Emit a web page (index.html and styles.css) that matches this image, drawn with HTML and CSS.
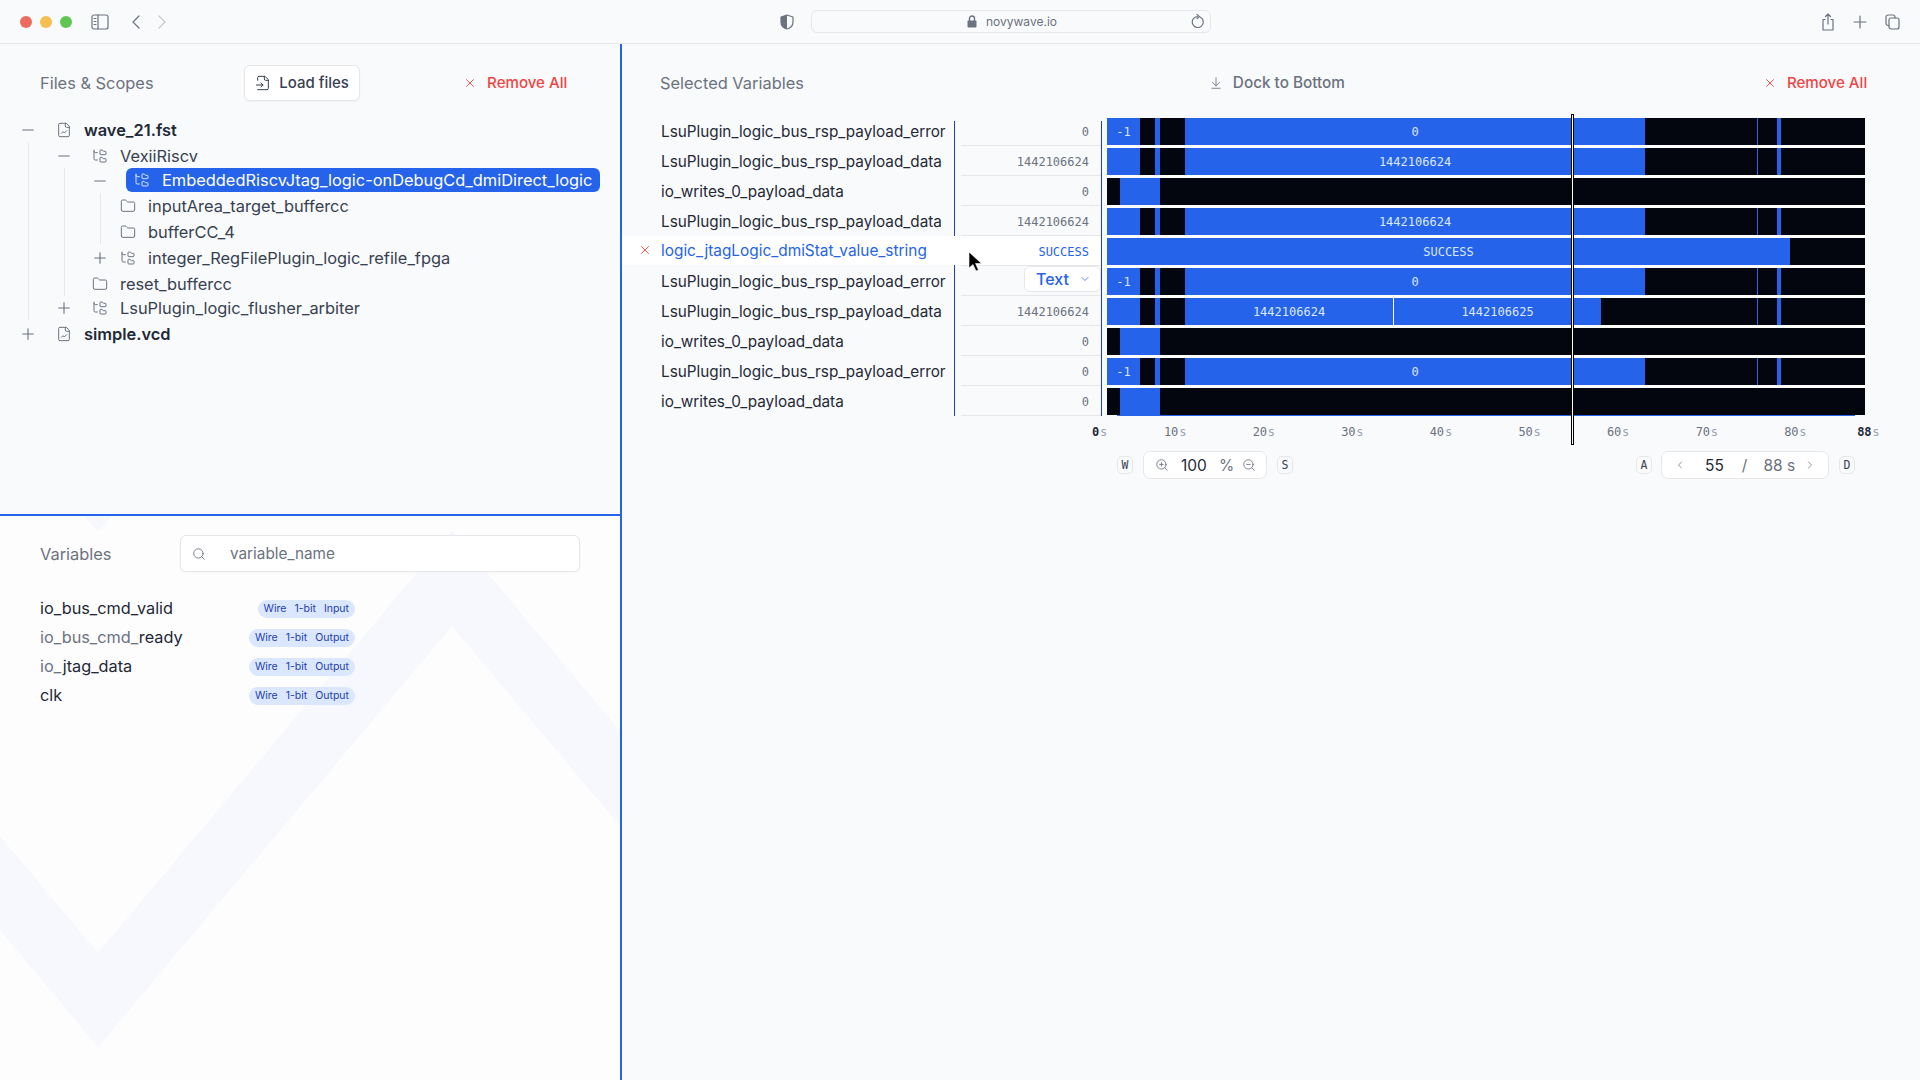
FILE: index.html
```html
<!DOCTYPE html>
<html lang="en">
<head>
<meta charset="utf-8">
<title>NovyWave</title>
<link rel="stylesheet" href="styles.css">
</head>
<body>
<svg class="sprite" aria-hidden="true">
  <symbol id="i-tree" viewBox="0 0 24 24"><path d="M20 10a1 1 0 0 0 1-1V6a1 1 0 0 0-1-1h-2.5a1 1 0 0 1-.8-.4l-.9-1.2A1 1 0 0 0 15 3h-2a1 1 0 0 0-1 1v5a1 1 0 0 0 1 1Z"/><path d="M20 21a1 1 0 0 0 1-1v-3a1 1 0 0 0-1-1h-2.9a1 1 0 0 1-.88-.55l-.42-.85a1 1 0 0 0-.92-.6H13a1 1 0 0 0-1 1v5a1 1 0 0 0 1 1Z"/><path d="M3 5a2 2 0 0 0 2 2h3"/><path d="M3 3v13a2 2 0 0 0 2 2h3"/></symbol>
  <symbol id="i-folder" viewBox="0 0 24 24"><path d="M20 20a2 2 0 0 0 2-2V8a2 2 0 0 0-2-2h-7.9a2 2 0 0 1-1.69-.9L9.6 3.9A2 2 0 0 0 7.93 3H4a2 2 0 0 0-2 2v13a2 2 0 0 0 2 2Z"/></symbol>
  <symbol id="i-file" viewBox="0 0 24 24"><path d="M15 2H6a2 2 0 0 0-2 2v16a2 2 0 0 0 2 2h12a2 2 0 0 0 2-2V7Z"/><path d="M14 2v4a2 2 0 0 0 2 2h4"/><path d="m16 13-3.5 3.5-2-2L8 17"/></symbol>
  <symbol id="i-load" viewBox="0 0 24 24"><path d="M4 22h14a2 2 0 0 0 2-2V7l-5-5H6a2 2 0 0 0-2 2v4"/><path d="M14 2v4a2 2 0 0 0 2 2h4"/><path d="M2 15h10"/><path d="m9 18 3-3-3-3"/></symbol>
  <symbol id="i-x" viewBox="0 0 24 24"><path d="M18 6 6 18"/><path d="m6 6 12 12"/></symbol>
  <symbol id="i-minus" viewBox="0 0 24 24"><path d="M5 12h14"/></symbol>
  <symbol id="i-plus" viewBox="0 0 24 24"><path d="M5 12h14"/><path d="M12 5v14"/></symbol>
  <symbol id="i-search" viewBox="0 0 24 24"><circle cx="11" cy="11" r="8"/><path d="m21 21-4.300-4.300"/></symbol>
  <symbol id="i-zin" viewBox="0 0 24 24"><circle cx="11" cy="11" r="8"/><path d="m21 21-4.300-4.300"/><path d="M11 8v6"/><path d="M8 11h6"/></symbol>
  <symbol id="i-zout" viewBox="0 0 24 24"><circle cx="11" cy="11" r="8"/><path d="m21 21-4.300-4.300"/><path d="M8 11h6"/></symbol>
  <symbol id="i-dock" viewBox="0 0 24 24"><path d="M12 17V3"/><path d="m6 11 6 6 6-6"/><path d="M19 21H5"/></symbol>
  <symbol id="i-left" viewBox="0 0 24 24"><path d="m15 18-6-6 6-6"/></symbol>
  <symbol id="i-right" viewBox="0 0 24 24"><path d="m9 18 6-6-6-6"/></symbol>
  <symbol id="i-down" viewBox="0 0 24 24"><path d="m6 9 6 6 6-6"/></symbol>
</svg>

<header class="topbar">
  <span class="light red"></span><span class="light yellow"></span><span class="light green"></span>
  <svg class="tb-side" width="18" height="16" viewBox="0 0 18 16"><rect x="1" y="1" width="16" height="14" rx="2"/><path d="M7 1v14M3 4.500h2M3 7.500h2M3 10.500h2"/></svg>
  <svg class="tb-back" width="10" height="16" viewBox="0 0 10 16"><path d="M8 2 2 8l6 6"/></svg>
  <svg class="tb-fwd" width="10" height="16" viewBox="0 0 10 16"><path d="m2 2 6 6-6 6"/></svg>
  <svg class="tb-shield" width="14" height="16" viewBox="0 0 14 16"><path class="fill" d="M7 1 1 3v5c0 3.500 2.500 6 6 7Z"/><path d="M7 1l6 2v5c0 3.500-2.500 6-6 7-3.500-1-6-3.500-6-7V3Z"/></svg>
  <div class="urlbar">
    <svg class="tb-lock" width="10" height="13" viewBox="0 0 10 13"><path class="line" d="M2.500 6V3.500a2.500 2.500 0 0 1 5 0V6"/><rect x="0.500" y="5.500" width="9" height="7" rx="1"/></svg>
    <span class="url">novywave.io</span>
    <svg class="tb-reload" width="14" height="15" viewBox="0 0 14 15"><path d="M9.500 3.200a5.500 5.500 0 1 1-3-.7"/><path d="M6 .5 8.500 2.600 6 4.700"/></svg>
  </div>
  <div class="tb-right">
    <svg width="14" height="18" viewBox="0 0 14 18"><path d="M4 6.500H2v10.500h10V6.500h-2M7 11V1M4.500 3.500 7 1l2.500 2.500"/></svg>
    <svg width="14" height="14" viewBox="0 0 14 14"><path d="M7 1v12M1 7h12"/></svg>
    <svg width="15" height="16" viewBox="0 0 15 16"><rect x="4" y="4" width="10" height="11" rx="2"/><path d="M4 11.500H3a2 2 0 0 1-2-2V3a2 2 0 0 1 2-2h5a2 2 0 0 1 2 2v1"/></svg>
  </div>
</header>

<main class="main">
  <aside class="left">
    <section class="files">
      <div class="phead">
        <h2 class="ptitle">Files &amp; Scopes</h2>
        <button class="load"><svg class="ic ic16"><use href="#i-load"/></svg>Load files</button>
        <button class="remove remove-left"><svg class="ic ic14"><use href="#i-x"/></svg>Remove All</button>
      </div>
      <div class="tree">
        <i class="guide g1"></i><i class="guide g2"></i><i class="guide g3"></i>
        <div class="tr l0"><svg class="ic tog"><use href="#i-minus"/></svg><svg class="ic node"><use href="#i-file"/></svg><span class="tn strong">wave_21.fst</span></div>
        <div class="tr l1"><svg class="ic tog"><use href="#i-minus"/></svg><svg class="ic node"><use href="#i-tree"/></svg><span class="tn">VexiiRiscv</span></div>
        <div class="tr l2 up1"><svg class="ic tog"><use href="#i-minus"/></svg><div class="sel"><svg class="ic node"><use href="#i-tree"/></svg><span class="tn">EmbeddedRiscvJtag_logic-onDebugCd_dmiDirect_logic</span></div></div>
        <div class="tr l2 up1"><span class="tog"></span><svg class="ic node"><use href="#i-folder"/></svg><span class="tn">inputArea_target_buffercc</span></div>
        <div class="tr l2"><span class="tog"></span><svg class="ic node"><use href="#i-folder"/></svg><span class="tn">bufferCC_4</span></div>
        <div class="tr l2"><svg class="ic tog"><use href="#i-plus"/></svg><svg class="ic node"><use href="#i-tree"/></svg><span class="tn">integer_RegFilePlugin_logic_refile_fpga</span></div>
        <div class="tr l1"><span class="tog"></span><svg class="ic node"><use href="#i-folder"/></svg><span class="tn">reset_buffercc</span></div>
        <div class="tr l1 up2"><svg class="ic tog"><use href="#i-plus"/></svg><svg class="ic node"><use href="#i-tree"/></svg><span class="tn">LsuPlugin_logic_flusher_arbiter</span></div>
        <div class="tr l0"><svg class="ic tog"><use href="#i-plus"/></svg><svg class="ic node"><use href="#i-file"/></svg><span class="tn strong">simple.vcd</span></div>
      </div>
    </section>
    <section class="vars">
      <svg class="zigzag" width="620" height="564" viewBox="0 516 620 564"><path d="M0 836 98 953 452 531 620 731V826L452 626 98 1047 0 930Z"/><path d="M84 516h28L98 532Z"/></svg>
      <div class="vhead">
        <h2 class="ptitle vtitle">Variables</h2>
        <div class="search"><svg class="ic ic14"><use href="#i-search"/></svg><span>variable_name</span></div>
      </div>
      <ul class="vlist">
        <li><span class="vn">io_bus_cmd_valid</span><span class="chip"><b>Wire</b><b>1-bit</b><b>Input</b></span></li>
        <li><span class="vn"><em>io_bus_cmd_</em>ready</span><span class="chip"><b>Wire</b><b>1-bit</b><b>Output</b></span></li>
        <li><span class="vn"><em>io_</em>jtag_data</span><span class="chip"><b>Wire</b><b>1-bit</b><b>Output</b></span></li>
        <li><span class="vn">clk</span><span class="chip"><b>Wire</b><b>1-bit</b><b>Output</b></span></li>
      </ul>
    </section>
  </aside>

  <section class="right">
    <div class="phead rhead">
      <h2 class="ptitle">Selected Variables</h2>
      <button class="dock"><svg class="ic ic14"><use href="#i-dock"/></svg>Dock to Bottom</button>
      <button class="remove"><svg class="ic ic14"><use href="#i-x"/></svg>Remove All</button>
    </div>
    <div class="track">
      <div class="vrow">
        <div class="meta"><div class="nm">LsuPlugin_logic_bus_rsp_payload_error</div><div class="val">0</div></div>
        <div class="wave"><i class="b" style="width:33px">-1</i><i class="k" style="width:15px"></i><i class="b" style="width:5px"></i><i class="k" style="width:25px"></i><i class="b" style="width:460px">0</i><i class="k" style="width:112px"></i><i class="b" style="width:1px"></i><i class="k" style="width:19px"></i><i class="b" style="width:4px"></i><i class="k" style="width:84px"></i></div>
      </div>
      <div class="vrow">
        <div class="meta"><div class="nm">LsuPlugin_logic_bus_rsp_payload_data</div><div class="val">1442106624</div></div>
        <div class="wave"><i class="b" style="width:33px"></i><i class="k" style="width:15px"></i><i class="b" style="width:5px"></i><i class="k" style="width:25px"></i><i class="b" style="width:460px">1442106624</i><i class="k" style="width:112px"></i><i class="b" style="width:1px"></i><i class="k" style="width:19px"></i><i class="b" style="width:4px"></i><i class="k" style="width:84px"></i></div>
      </div>
      <div class="vrow">
        <div class="meta"><div class="nm">io_writes_0_payload_data</div><div class="val">0</div></div>
        <div class="wave"><i class="k" style="width:13px"></i><i class="b" style="width:40px"></i><i class="k" style="width:705px"></i></div>
      </div>
      <div class="vrow">
        <div class="meta"><div class="nm">LsuPlugin_logic_bus_rsp_payload_data</div><div class="val">1442106624</div></div>
        <div class="wave"><i class="b" style="width:33px"></i><i class="k" style="width:15px"></i><i class="b" style="width:5px"></i><i class="k" style="width:25px"></i><i class="b" style="width:460px">1442106624</i><i class="k" style="width:112px"></i><i class="b" style="width:1px"></i><i class="k" style="width:19px"></i><i class="b" style="width:4px"></i><i class="k" style="width:84px"></i></div>
      </div>
      <div class="vrow active">
        <div class="meta"><svg class="ic rowx"><use href="#i-x"/></svg><div class="nm">logic_jtagLogic_dmiStat_value_string</div><div class="val">SUCCESS</div></div>
        <div class="wave"><i class="b" style="width:683px">SUCCESS</i><i class="k" style="width:75px"></i></div>
      </div>
      <div class="vrow">
        <div class="meta"><div class="nm">LsuPlugin_logic_bus_rsp_payload_error</div><div class="val val-menu"><div class="fmt">Text<svg class="ic ic12"><use href="#i-down"/></svg></div></div></div>
        <div class="wave"><i class="b" style="width:33px">-1</i><i class="k" style="width:15px"></i><i class="b" style="width:5px"></i><i class="k" style="width:25px"></i><i class="b" style="width:460px">0</i><i class="k" style="width:112px"></i><i class="b" style="width:1px"></i><i class="k" style="width:19px"></i><i class="b" style="width:4px"></i><i class="k" style="width:84px"></i></div>
      </div>
      <div class="vrow">
        <div class="meta"><div class="nm">LsuPlugin_logic_bus_rsp_payload_data</div><div class="val">1442106624</div></div>
        <div class="wave"><i class="b" style="width:33px"></i><i class="k" style="width:15px"></i><i class="b" style="width:5px"></i><i class="k" style="width:25px"></i><i class="b" style="width:208px">1442106624</i><i class="w" style="width:1px"></i><i class="b" style="width:207px">1442106625</i><i class="k" style="width:156px"></i><i class="b" style="width:1px"></i><i class="k" style="width:19px"></i><i class="b" style="width:4px"></i><i class="k" style="width:84px"></i></div>
      </div>
      <div class="vrow">
        <div class="meta"><div class="nm">io_writes_0_payload_data</div><div class="val">0</div></div>
        <div class="wave"><i class="k" style="width:13px"></i><i class="b" style="width:40px"></i><i class="k" style="width:705px"></i></div>
      </div>
      <div class="vrow">
        <div class="meta"><div class="nm">LsuPlugin_logic_bus_rsp_payload_error</div><div class="val">0</div></div>
        <div class="wave"><i class="b" style="width:33px">-1</i><i class="k" style="width:15px"></i><i class="b" style="width:5px"></i><i class="k" style="width:25px"></i><i class="b" style="width:460px">0</i><i class="k" style="width:112px"></i><i class="b" style="width:1px"></i><i class="k" style="width:19px"></i><i class="b" style="width:4px"></i><i class="k" style="width:84px"></i></div>
      </div>
      <div class="vrow">
        <div class="meta"><div class="nm">io_writes_0_payload_data</div><div class="val">0</div></div>
        <div class="wave"><i class="k" style="width:13px"></i><i class="b" style="width:40px"></i><i class="k" style="width:705px"></i></div>
      </div>
      <i class="baseline"></i>
      <i class="timecursor"></i>
      <svg class="pointer" width="18" height="22" viewBox="0 0 18 22"><path d="M1 1v16l4-3.500 3 6.500 2.500-1-3-6.500h6Z"/></svg>
    </div>
    <div class="axis">
      <span class="tick t0"><b>0</b><u>s</u></span>
      <span class="tick">10<u>s</u></span>
      <span class="tick">20<u>s</u></span>
      <span class="tick">30<u>s</u></span>
      <span class="tick">40<u>s</u></span>
      <span class="tick">50<u>s</u></span>
      <span class="tick">60<u>s</u></span>
      <span class="tick">70<u>s</u></span>
      <span class="tick t80">80<u>s</u></span>
      <span class="tick"><b>88</b><u>s</u></span>
    </div>
    <div class="controls">
      <kbd class="key">W</kbd>
      <div class="pill zoom">
        <svg class="ic ic14"><use href="#i-zin"/></svg>
        <span class="num n100">100</span>
        <span class="unit">%</span>
        <svg class="ic ic14"><use href="#i-zout"/></svg>
      </div>
      <kbd class="key">S</kbd>
      <kbd class="key key-a">A</kbd>
      <div class="pill time">
        <svg class="ic ic12"><use href="#i-left"/></svg>
        <span class="num n55">55</span>
        <span class="unit slash">/</span>
        <span class="unit total">88 s</span>
        <svg class="ic ic12"><use href="#i-right"/></svg>
      </div>
      <kbd class="key">D</kbd>
    </div>
  </section>
</main>
</body>
</html>
```

FILE: styles.css
```css
* { box-sizing: border-box; }
html, body { margin: 0; height: 100%; }
body {
  width: 1920px;
  height: 1080px;
  overflow: hidden;
  background: #f9fafc;
  color: #1f2937;
  font-family: Inter, "Liberation Sans", sans-serif;
  font-size: 16px;
}
.sprite { display: none; }
h2, ul { margin: 0; padding: 0; }
ul { list-style: none; }
button { font: inherit; background: none; border: 0; padding: 0; display: inline-flex; align-items: center; }
.ic { fill: none; stroke: currentColor; stroke-width: 1.5; stroke-linecap: round; stroke-linejoin: round; flex: none; }
.ic12 { width: 12px; height: 12px; }
.ic14 { width: 14px; height: 14px; }
.ic16 { width: 16px; height: 16px; }

/* browser bar */
.topbar {
  height: 44px;
  display: flex;
  align-items: center;
  padding-left: 20px;
  border-bottom: 1px solid #e5e7eb;
  background: #f9fafc;
}
.topbar svg { fill: none; stroke: #6b7280; stroke-width: 1.2; stroke-linecap: round; stroke-linejoin: round; flex: none; }
.light { width: 12px; height: 12px; border-radius: 50%; margin-right: 8px; }
.red { background: #ed6a5e; }
.yellow { background: #f5bf4f; }
.green { background: #61c554; }
.tb-side { margin-left: 10.5px; }
.tb-back { margin-left: 22px; }
.tb-fwd { margin-left: 16px; stroke: #c4c8cf !important; }
.tb-shield { margin-left: 613.5px; }
.tb-shield .fill { fill: #6b7280; stroke: none; }
.urlbar {
  margin-left: 17px;
  width: 400px;
  height: 23px;
  display: flex;
  align-items: center;
  border: 1px solid #e5e7eb;
  border-radius: 6px;
  padding: 0 5px 0 155px;
}
.tb-lock rect { fill: #6b7280; stroke: none; }
.tb-lock .line { stroke-width: 1.4; }
.url { margin-left: 9px; font-size: 12px; color: #6b7280; }
.tb-reload { margin-left: auto; }
.tb-right { margin-left: 609.5px; display: flex; align-items: center; gap: 18px; }

.main { display: flex; height: 1036px; }

/* left column */
.left {
  width: 622px;
  flex: none;
  display: flex;
  flex-direction: column;
  border-right: 2px solid #2563eb;
}
.files { height: 472px; flex: none; border-bottom: 2px solid #2563eb; background: #f9fafc; }
.phead { display: flex; align-items: center; height: 36px; margin-top: 21px; padding-left: 40px; }
.ptitle { font-size: 16.4px; font-weight: 400; color: #6b7280; }
.load {
  margin-left: 90.5px;
  width: 116px;
  height: 36px;
  justify-content: center;
  gap: 8px;
  padding-bottom: 1px;
  background: #fff;
  border: 1px solid #e5e7eb;
  border-radius: 6px;
  box-shadow: 0 1px 2px rgba(0,0,0,.04);
  font-weight: 500;
  font-size: 15px;
  color: #374151;
}
.remove { gap: 10px; color: #ef4444; font-weight: 500; font-size: 15.1px; padding-bottom: 1px; }
.remove-left { margin-left: 103px; }

.tree { position: relative; margin-top: 16px; }
.guide { position: absolute; width: 1px; background: #e5e7eb; }
.g1 { left: 28px; top: 26px; height: 177px; }
.g2 { left: 64px; top: 51px; height: 128px; }
.g3 { left: 100px; top: 76px; height: 51px; }
.tr { display: flex; align-items: center; height: 26px; color: #374151; }
.up1 { margin-top: -1px; }
.up2 { margin-top: -2px; }
.l0 { padding-left: 19px; }
.l1 { padding-left: 55px; }
.l2 { padding-left: 91px; }
.tog { width: 18px; height: 18px; flex: none; color: #6b7280; margin-right: 19px; }
.l2 .tog { margin-right: 11px; }
.node { width: 16px; height: 16px; color: #6b7280; }
.tn { margin-left: 12px; white-space: nowrap; font-size: 16.4px; }
.strong { font-weight: 600; color: #1f2937; }
.sel {
  display: flex;
  align-items: center;
  height: 24px;
  width: 474px;
  margin: -2px 0 0 6px;
  padding-left: 8px;
  background: #2563eb;
  border-radius: 6px;
  color: #fff;
}
.sel .node { color: #dbe7fe; }

/* variables */
.vars { position: relative; flex: 1; background: #fdfdfe; overflow: hidden; padding-top: 19px; }
.zigzag { position: absolute; left: 0; top: 0; }
.zigzag path { fill: #f6f8fd; }
.vhead { position: relative; display: flex; align-items: center; padding-left: 40px; }
.vtitle { width: 140px; }
.search {
  width: 400px;
  height: 37px;
  display: flex;
  align-items: center;
  padding-left: 11px;
  background: #fff;
  border: 1px solid #e5e7eb;
  border-radius: 6px;
  box-shadow: 0 1px 2px rgba(0,0,0,.03);
  color: #6b7280;
  font-size: 15.3px;
}
.search span { margin-left: 24px; }
.vlist { position: relative; margin: 21px 0 0 40px; width: 315px; }
.vlist li { display: flex; align-items: center; justify-content: space-between; height: 29px; }
.vn { color: #1f2937; font-size: 16.3px; }
.vn em { font-style: normal; color: #6b7280; }
.chip {
  display: flex;
  align-items: center;
  gap: 8px;
  height: 18px;
  margin-top: 2px;
  padding: 0 6px;
  border-radius: 9px;
  background: #dbe7fe;
  color: #1e40af;
  font-size: 10.5px;
}
.chip b { font-weight: 400; }

/* right column */
.right { flex: 1; min-width: 0; }
.rhead { padding-left: 38px; }
.dock { margin-left: 405px; gap: 10px; color: #6b7280; font-weight: 500; font-size: 15.3px; padding-bottom: 1px; }
.rhead .remove { margin-left: 418px; }
.track { position: relative; margin-top: 17px; height: 300px; }
.track::before, .track::after {
  content: "";
  position: absolute;
  top: 3px;
  height: 295px;
  width: 1px;
  background: #1e40af;
}
.track::before { left: 332px; }
.track::after { left: 479px; }
.vrow { display: flex; height: 30px; align-items: flex-start; }
.meta { position: relative; width: 480px; height: 28px; flex: none; display: flex; }
.nm { width: 332px; flex: none; padding: 0 0 2px 39px; display: flex; align-items: center; height: 28px; color: #1f2937; white-space: nowrap; font-size: 15.3px; }
.val {
  margin-left: 7px;
  width: 140px;
  height: 28px;
  display: flex;
  align-items: center;
  justify-content: flex-end;
  padding-right: 12px;
  border-bottom: 1px solid #e5e7eb;
  font: 12px "DejaVu Sans Mono", monospace;
  color: #6b7280;
}
.active .meta { background: #fff; height: 29px; margin-top: -2px; }
.active .nm { color: #2563eb; padding-bottom: 0; font-size: 15.4px; }
.active .val { color: #2563eb; padding-top: 3px; height: 30px; }
.rowx { position: absolute; left: 16px; top: 7px; width: 14px; height: 14px; color: #ef4444; }
.val-menu { align-items: flex-start; padding-right: 0; }
.fmt {
  margin-top: -2px;
  width: 77px;
  height: 26px;
  display: flex;
  align-items: center;
  gap: 10px;
  padding-left: 11px;
  background: #fff;
  border: 1px solid #e5e7eb;
  border-radius: 6px;
  font: 500 16px Inter, sans-serif;
  color: #2563eb;
}
.wave {
  margin-left: 5px;
  width: 758px;
  height: 30px;
  flex: none;
  display: flex;
  align-items: flex-start;
  background: #fff;
}
.vrow:last-of-type .wave { height: 27px; }
.wave i {
  display: flex;
  align-items: center;
  justify-content: center;
  height: 27px;
  font: 12px "DejaVu Sans Mono", monospace;
  color: #dbe7fe;
}
.b { background: #2563eb; }
.k { background: #03060f; }
.w { background: #fff; }
.baseline { position: absolute; left: 495px; top: 297px; width: 738px; height: 1px; background: #2563eb; }
.timecursor {
  position: absolute;
  left: 949px;
  top: -4px;
  width: 3px;
  height: 331px;
  background: #fff;
  border: 1px solid #000;
}
.pointer { position: absolute; left: 346px; top: 133px; }
.pointer path { fill: #000; stroke: #fff; stroke-width: .6; }

.axis { display: flex; height: 16px; margin: 7px 0 0 470px; font: 12px "DejaVu Sans Mono", monospace; color: #6b7280; }
.tick { width: 22px; margin-right: 66.6px; white-space: nowrap; letter-spacing: -.2px; }
.tick u { text-decoration: none; color: #9ca3af; margin-left: 1px; }
.tick b { color: #1f2937; font-weight: 700; }
.t0 { width: 16px; margin-right: 57px; }
.t80 { margin-right: 51px; }

.controls { display: flex; align-items: center; height: 28px; margin: 10px 0 0 495px; }
.key {
  width: 16px;
  height: 18px;
  display: flex;
  align-items: center;
  justify-content: center;
  background: #f9fafc;
  border: 1px solid #e5e7eb;
  border-radius: 5px;
  font: 11.5px "DejaVu Sans Mono", monospace;
  color: #374151;
}
.key-a { margin-left: 343px; }
.pill {
  display: flex;
  align-items: center;
  height: 28px;
  background: #fff;
  border: 1px solid #e5e7eb;
  border-radius: 7px;
  color: #6b7280;
}
.zoom { width: 124px; margin: 0 10px; padding-left: 11px; }
.time { width: 168px; margin: 0 10px 0 9px; padding-left: 12px; }
.num { font: 15.5px Inter, sans-serif; color: #1f2937; }
.unit { font: 15.5px Inter, sans-serif; color: #6b7280; }
.n100 { margin: 0 12px 0 12px; }
.zoom .unit { margin-right: 8px; }
.n55 { margin: 0 18px 0 19px; }
.slash { margin-right: 16px; }
.total { margin-right: 9px; }
```
